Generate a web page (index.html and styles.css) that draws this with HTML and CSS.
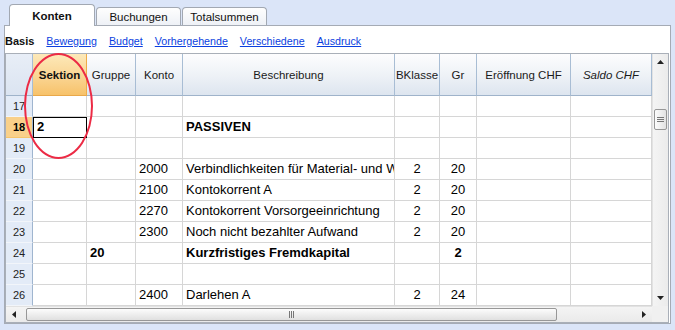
FILE: index.html
```html
<!DOCTYPE html>
<html lang="de">
<head>
    <meta charset="UTF-8">
    <title>Konten</title>
    <link rel="stylesheet" href="styles.css">
</head>
<body>

    <div class="tabs">
        <div class="tab tab-active">Konten</div>
        <div class="tab">Buchungen</div>
        <div class="tab">Totalsummen</div>
    </div>

    <div class="panel">
        <div class="subnav">
            <b>Basis</b>
            <a href="#">Bewegung</a>
            <a href="#">Budget</a>
            <a href="#">Vorhergehende</a>
            <a href="#">Verschiedene</a>
            <a href="#">Ausdruck</a>
        </div>

        <div class="frame">
            <div class="sheet">
                <div class="row head">
                    <div class="c rh"></div>
                    <div class="c sel">Sektion</div>
                    <div class="c">Gruppe</div>
                    <div class="c">Konto</div>
                    <div class="c">Beschreibung</div>
                    <div class="c">BKlasse</div>
                    <div class="c">Gr</div>
                    <div class="c">Eröffnung CHF</div>
                    <div class="c it">Saldo CHF</div>
                </div>

                <div class="row">
                    <div class="c rh">17</div>
                    <div class="c"></div><div class="c"></div><div class="c"></div><div class="c"></div>
                    <div class="c"></div><div class="c"></div><div class="c"></div><div class="c"></div>
                </div>
                <div class="row">
                    <div class="c rh cur">18</div>
                    <div class="c edit">2</div><div class="c"></div><div class="c"></div>
                    <div class="c b">PASSIVEN</div>
                    <div class="c"></div><div class="c"></div><div class="c"></div><div class="c"></div>
                </div>
                <div class="row">
                    <div class="c rh">19</div>
                    <div class="c"></div><div class="c"></div><div class="c"></div><div class="c"></div>
                    <div class="c"></div><div class="c"></div><div class="c"></div><div class="c"></div>
                </div>
                <div class="row">
                    <div class="c rh">20</div>
                    <div class="c"></div><div class="c"></div>
                    <div class="c">2000</div>
                    <div class="c">Verbindlichkeiten für Material- und Warenlieferungen</div>
                    <div class="c mid">2</div><div class="c mid">20</div>
                    <div class="c"></div><div class="c"></div>
                </div>
                <div class="row">
                    <div class="c rh">21</div>
                    <div class="c"></div><div class="c"></div>
                    <div class="c">2100</div>
                    <div class="c">Kontokorrent A</div>
                    <div class="c mid">2</div><div class="c mid">20</div>
                    <div class="c"></div><div class="c"></div>
                </div>
                <div class="row">
                    <div class="c rh">22</div>
                    <div class="c"></div><div class="c"></div>
                    <div class="c">2270</div>
                    <div class="c">Kontokorrent Vorsorgeeinrichtung</div>
                    <div class="c mid">2</div><div class="c mid">20</div>
                    <div class="c"></div><div class="c"></div>
                </div>
                <div class="row">
                    <div class="c rh">23</div>
                    <div class="c"></div><div class="c"></div>
                    <div class="c">2300</div>
                    <div class="c">Noch nicht bezahlter Aufwand</div>
                    <div class="c mid">2</div><div class="c mid">20</div>
                    <div class="c"></div><div class="c"></div>
                </div>
                <div class="row">
                    <div class="c rh">24</div>
                    <div class="c"></div>
                    <div class="c b">20</div>
                    <div class="c"></div>
                    <div class="c b">Kurzfristiges Fremdkapital</div>
                    <div class="c"></div><div class="c mid b">2</div>
                    <div class="c"></div><div class="c"></div>
                </div>
                <div class="row">
                    <div class="c rh">25</div>
                    <div class="c"></div><div class="c"></div><div class="c"></div><div class="c"></div>
                    <div class="c"></div><div class="c"></div><div class="c"></div><div class="c"></div>
                </div>
                <div class="row">
                    <div class="c rh">26</div>
                    <div class="c"></div><div class="c"></div>
                    <div class="c">2400</div>
                    <div class="c">Darlehen A</div>
                    <div class="c mid">2</div><div class="c mid">24</div>
                    <div class="c"></div><div class="c"></div>
                </div>
            </div>

            <div class="vscroll">
                <div class="arrow"><svg width="7" height="4" viewBox="0 0 7 4"><path d="M3.5 0 L7 4 L0 4 Z" fill="#222"/></svg></div>
                <div class="vthumb"><svg width="7" height="7" viewBox="0 0 7 7"><path d="M0 1.5h7M0 3.5h7M0 5.5h7" stroke="#777" stroke-width="1"/></svg></div>
                <div class="spacer"></div>
                <div class="arrow"><svg width="7" height="4" viewBox="0 0 7 4"><path d="M0 0 L7 0 L3.5 4 Z" fill="#222"/></svg></div>
            </div>

            <div class="hscroll">
                <div class="arrow"><svg width="4" height="7" viewBox="0 0 4 7"><path d="M0 3.5 L4 0 L4 7 Z" fill="#222"/></svg></div>
                <div class="hthumb"><svg width="7" height="7" viewBox="0 0 7 7"><path d="M1.5 0v7M3.5 0v7M5.5 0v7" stroke="#777" stroke-width="1"/></svg></div>
                <div class="arrow"><svg width="4" height="7" viewBox="0 0 4 7"><path d="M0 0 L4 3.5 L0 7 Z" fill="#222"/></svg></div>
            </div>

            <div class="corner"></div>
        </div>
    </div>

    <div class="marker"></div>

</body>
</html>
```

FILE: styles.css
```css
body {
    margin: 0;
    width: 675px;
    height: 330px;
    overflow: hidden;
    position: relative;
    background-color: #dbe5f8;
    font-family: "Liberation Sans", Arial, sans-serif;
    font-size: 11px;
    color: #000;
}

/* tabs */
.tabs {
    display: flex;
    align-items: flex-end;
    gap: 1px;
    height: 25px;
    padding-left: 9px;
    box-sizing: border-box;
}
.tab {
    width: 85px;
    height: 18px;
    box-sizing: border-box;
    border: 1px solid #a2a8b2;
    border-bottom: none;
    border-radius: 4px 4px 0 0;
    background: linear-gradient(#fefefe, #eef1f6);
    display: flex;
    align-items: center;
    justify-content: center;
    font-size: 11.5px;
    color: #111;
}
.tab-active {
    width: 86px;
    height: 22px;
    margin-bottom: -1px;
    background: #fff;
    font-weight: bold;
    position: relative;
    z-index: 1;
}

/* panel */
.panel {
    margin-left: 4px;
    width: 667px;
    height: 299px;
    box-sizing: border-box;
    border: 1px solid #a5abb5;
    padding-right: 1px;
    background: #fff;
}
.subnav {
    display: flex;
    gap: 12px;
    height: 27px;
    box-sizing: border-box;
    padding-top: 9px;
    font-size: 10.7px;
    line-height: 13px;
}
.subnav b {
    color: #111;
    font-size: 11px;
}
.subnav a {
    color: #0b3fe0;
    text-decoration: underline;
}

/* sheet */
.frame {
    width: 664px;
    height: 270px;
    box-sizing: border-box;
    border: 1px solid #a9afb8;
    display: grid;
    grid-template-columns: 646px 16px;
    grid-template-rows: 252px 16px;
}
.sheet {
    overflow: hidden;
}
.row {
    display: grid;
    grid-template-columns: 27px 54px 49px 47px 212px 45px 37px 94px 81px;
    height: 21px;
}
.c {
    box-sizing: border-box;
    border-right: 1px solid #d6d6d6;
    border-bottom: 1px solid #d6d6d6;
    padding: 0 3px;
    font-size: 13px;
    line-height: 20px;
    white-space: nowrap;
    overflow: hidden;
}
.b {
    font-weight: bold;
}
.mid {
    text-align: center;
}
.rh {
    background: #e3ebf7;
    border-right: 1px solid #9fb5cf;
    border-bottom: 1px solid #f2f5fa;
    padding: 0;
    text-align: center;
    font-size: 11px;
    color: #222;
}
.rh.cur {
    background: #f9d08a;
    border-bottom-color: #f5c46c;
    font-weight: bold;
    color: #000;
}
.edit {
    outline: 1px solid #000;
    outline-offset: -1px;
    font-weight: bold;
    padding-left: 4px;
}

.row.head {
    height: 42px;
}
.head .c {
    display: flex;
    align-items: center;
    justify-content: center;
    padding: 0;
    font-size: 11.5px;
    color: #1a1a1a;
    background: linear-gradient(#fdfdfe, #edf1f6 55%, #dde5ef);
    border-right: 1px solid #a8bdd4;
    border-bottom: 1px solid #9fb3ca;
}
.head .rh {
    background: linear-gradient(#e8eef7, #dbe4f1);
}
.head .sel {
    background: linear-gradient(#fde9b9, #fad593 55%, #f7c26a);
    border-right-color: #efac48;
    border-bottom-color: #e9a84a;
    font-weight: bold;
    color: #111;
}
.head .it {
    font-style: italic;
}

/* scrollbars */
.vscroll {
    display: flex;
    flex-direction: column;
    align-items: center;
    background: linear-gradient(to right, #f4f4f4, #ebebeb);
    border-left: 1px solid #e2e2e2;
    box-sizing: border-box;
}
.vscroll .arrow {
    height: 16px;
    display: flex;
    align-items: center;
    justify-content: center;
}
.vthumb {
    margin-top: 39px;
    width: 13px;
    height: 21px;
    box-sizing: border-box;
    border: 1px solid #979797;
    border-radius: 2px;
    background: linear-gradient(to right, #fcfcfc, #e2e2e2);
    display: flex;
    align-items: center;
    justify-content: center;
}
.spacer {
    flex: 1;
}
.hscroll {
    display: flex;
    align-items: center;
    background: linear-gradient(#f4f4f4, #eaeaea);
    border-top: 1px solid #e2e2e2;
    box-sizing: border-box;
}
.hscroll .arrow {
    width: 16px;
    height: 15px;
    display: flex;
    align-items: center;
    justify-content: center;
}
.hthumb {
    margin-left: 4px;
    width: 531px;
    height: 13px;
    box-sizing: border-box;
    border: 1px solid #979797;
    border-radius: 2px;
    background: linear-gradient(#fcfcfc, #e0e0e0);
    display: flex;
    align-items: center;
    justify-content: center;
    margin-right: auto;
}
.corner {
    background: #f0f0f0;
}

/* red annotation ring */
.marker {
    position: absolute;
    left: 24px;
    top: 53px;
    width: 69px;
    height: 106px;
    box-sizing: border-box;
    border: 2px solid #ec2b45;
    border-radius: 50%;
}
```
